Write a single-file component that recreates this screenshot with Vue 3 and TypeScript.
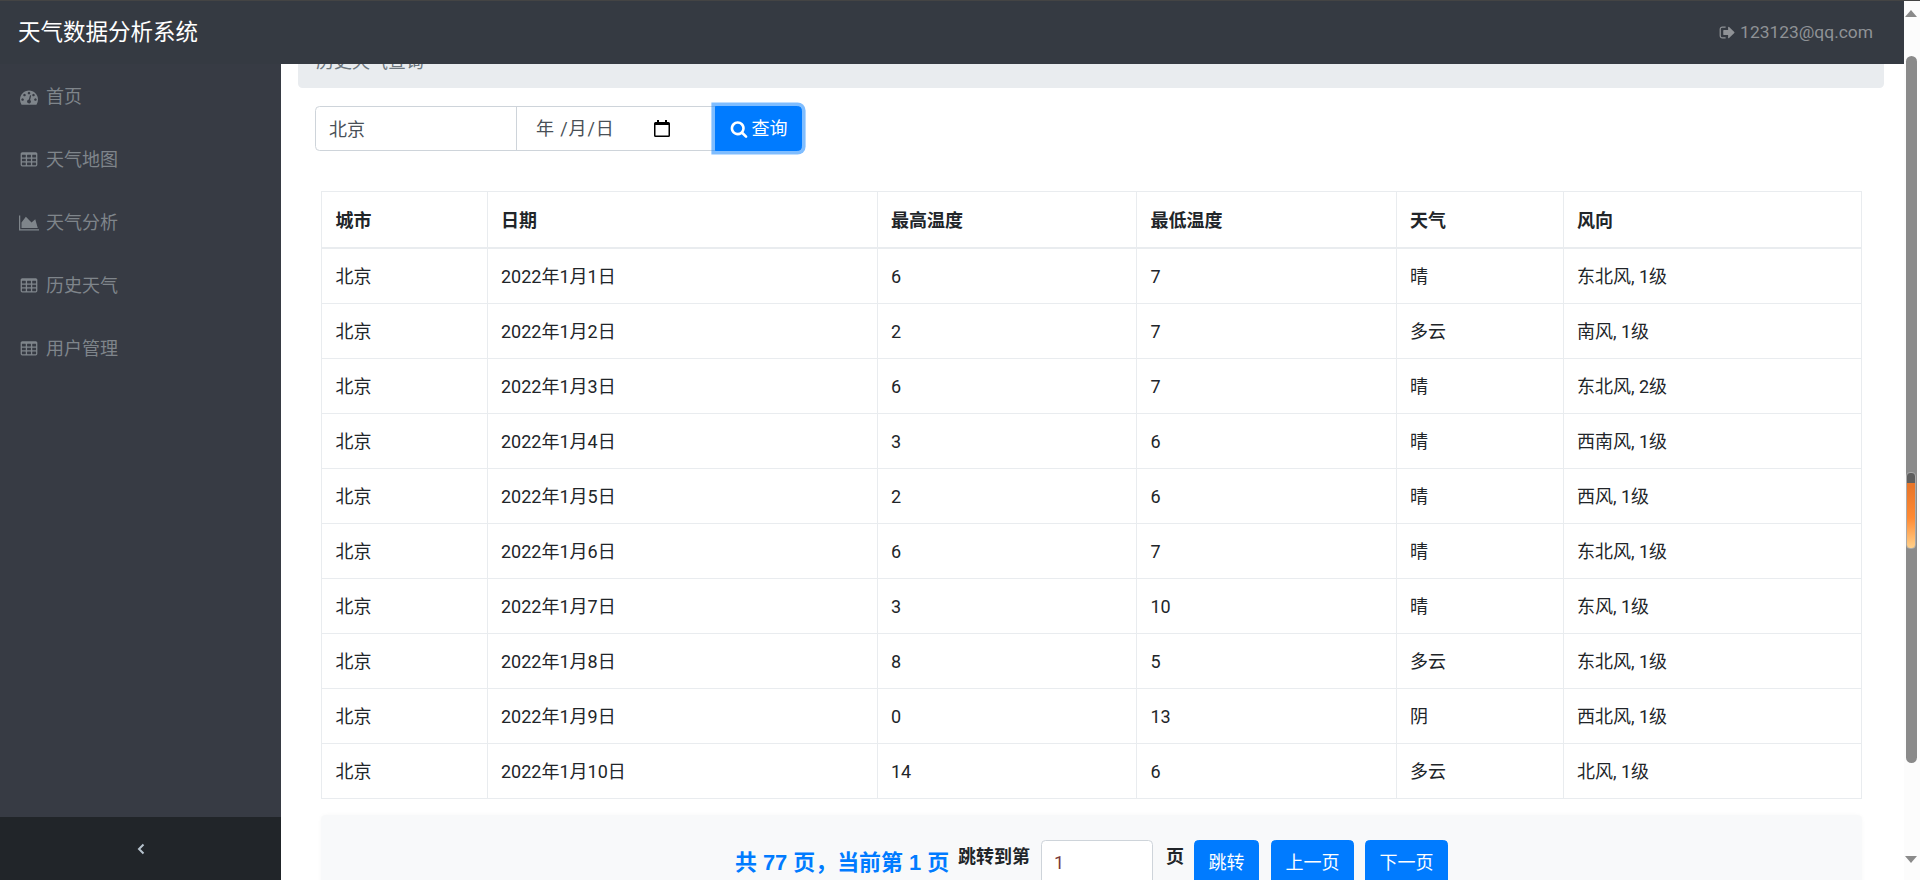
<script setup lang="ts">
interface WeatherRow {
  date: string;
  high: number;
  low: number;
  weather: string;
  wind: string;
}

const navItems = [
  { label: "首页", icon: "gauge" },
  { label: "天气地图", icon: "table" },
  { label: "天气分析", icon: "area" },
  { label: "历史天气", icon: "table" },
  { label: "用户管理", icon: "table" },
];

const columns = ["城市", "日期", "最高温度", "最低温度", "天气", "风向"];

const rows: WeatherRow[] = [
  { date: "2022年1月1日", high: 6, low: 7, weather: "晴", wind: "东北风, 1级" },
  { date: "2022年1月2日", high: 2, low: 7, weather: "多云", wind: "南风, 1级" },
  { date: "2022年1月3日", high: 6, low: 7, weather: "晴", wind: "东北风, 2级" },
  { date: "2022年1月4日", high: 3, low: 6, weather: "晴", wind: "西南风, 1级" },
  { date: "2022年1月5日", high: 2, low: 6, weather: "晴", wind: "西风, 1级" },
  { date: "2022年1月6日", high: 6, low: 7, weather: "晴", wind: "东北风, 1级" },
  { date: "2022年1月7日", high: 3, low: 10, weather: "晴", wind: "东风, 1级" },
  { date: "2022年1月8日", high: 8, low: 5, weather: "多云", wind: "东北风, 1级" },
  { date: "2022年1月9日", high: 0, low: 13, weather: "阴", wind: "西北风, 1级" },
  { date: "2022年1月10日", high: 14, low: 6, weather: "多云", wind: "北风, 1级" },
];

const tablePath =
  "M576 1376v-192q0-14-9-23t-23-9h-320q-14 0-23 9t-9 23v192q0 14 9 23t23 9h320q14 0 23-9t9-23zm0-384v-192q0-14-9-23t-23-9h-320q-14 0-23 9t-9 23v192q0 14 9 23t23 9h320q14 0 23-9t9-23zm512 384v-192q0-14-9-23t-23-9h-320q-14 0-23 9t-9 23v192q0 14 9 23t23 9h320q14 0 23-9t9-23zm-512-768v-192q0-14-9-23t-23-9h-320q-14 0-23 9t-9 23v192q0 14 9 23t23 9h320q14 0 23-9t9-23zm512 384v-192q0-14-9-23t-23-9h-320q-14 0-23 9t-9 23v192q0 14 9 23t23 9h320q14 0 23-9t9-23zm512 384v-192q0-14-9-23t-23-9h-320q-14 0-23 9t-9 23v192q0 14 9 23t23 9h320q14 0 23-9t9-23zm-512-768v-192q0-14-9-23t-23-9h-320q-14 0-23 9t-9 23v192q0 14 9 23t23 9h320q14 0 23-9t9-23zm512 384v-192q0-14-9-23t-23-9h-320q-14 0-23 9t-9 23v192q0 14 9 23t23 9h320q14 0 23-9t9-23zm0-384v-192q0-14-9-23t-23-9h-320q-14 0-23 9t-9 23v192q0 14 9 23t23 9h320q14 0 23-9t9-23zm128-320v1088q0 66-47 113t-113 47h-1344q-66 0-113-47t-47-113v-1088q0-66 47-113t113-47h1344q66 0 113 47t47 113z";
const gaugePath =
  "M384 1152q0-53-37.500-90.500t-90.500-37.500-90.500 37.500-37.500 90.500 37.500 90.500 90.500 37.500 90.500-37.500 37.500-90.500zm192-448q0-53-37.500-90.500t-90.500-37.500-90.500 37.500-37.500 90.500 37.500 90.500 90.500 37.500 90.500-37.500 37.500-90.500zm428 481l101-382q6-26-7.500-48.500t-38.500-29.500-48 7-30 39l-101 382q-60 5-107 43.500t-63 98.500q-20 77 20 146t117 89 146-20 89-117q16-60-6-117t-72-91zm660-33q0-53-37.500-90.500t-90.500-37.500-90.500 37.500-37.500 90.500 37.500 90.500 90.500 37.500 90.500-37.500 37.500-90.500zm-640-640q0-53-37.500-90.500t-90.500-37.500-90.500 37.500-37.500 90.500 37.500 90.500 90.500 37.500 90.500-37.500 37.500-90.500zm448 192q0-53-37.500-90.500t-90.500-37.500-90.500 37.500-37.500 90.500 37.500 90.500 90.500 37.500 90.500-37.500 37.500-90.500zm320 448q0 261-141 483-19 29-54 29h-1402q-35 0-54-29-141-221-141-483 0-182 71-348t191-286 286-191 348-71 348 71 286 191 191 286 71 348z";
const areaPath = "M2048 1536v128h-2048v-1536h128v1408h1920zm-384-1024l256 896h-1664v-576l448-576 576 576z";
const signOutPath =
  "M704 1440q0 4 1 20t.5 26.500-3 23.500-10 19.500-20.500 6.500h-320q-119 0-203.500-84.500t-84.500-203.500v-704q0-119 84.500-203.500t203.500-84.500h320q13 0 22.500 9.500t9.500 22.500q0 4 1 20t.5 26.500-3 23.500-10 19.500-20.500 6.500h-320q-66 0-113 47t-47 113v704q0 66 47 113t113 47h312l11.500 1 11.500 3 8 5.500 7 9 2 13.500zm928-544q0 26-19 45l-544 544q-19 19-45 19t-45-19-19-45v-288h-448q-26 0-45-19t-19-45v-384q0-26 19-45t45-19h448v-288q0-26 19-45t45-19 45 19l544 544q19 19 19 45z";
const searchPath =
  "M1216 832q0-185-131.500-316.500t-316.500-131.500-316.500 131.500-131.500 316.500 131.500 316.500 316.500 131.500 316.500-131.500 131.500-316.500zm512 832q0 52-38 90t-90 38q-54 0-90-38l-343-342q-179 124-399 124-143 0-273.500-55.500t-225-150-150-225-55.500-273.500 55.500-273.500 150-225 225-150 273.500-55.500 273.500 55.500 225 150 150 225 55.500 273.500q0 220-124 399l343 343q37 37 37 90z";
</script>

<template>
  <div class="shell">
    <div class="app">
      <header class="topbar">
        <span class="brand">天气数据分析系统</span>
        <a class="user">
          <svg class="user-icon" viewBox="0 0 1792 1792"><path :d="signOutPath" /></svg>
          123123@qq.com
        </a>
      </header>
      <div class="body">
        <aside class="sidebar">
          <nav class="nav">
            <a v-for="item in navItems" :key="item.label" class="nav-link">
              <svg v-if="item.icon === 'area'" class="nav-icon area" viewBox="0 0 2048 1792"><path :d="areaPath" /></svg>
              <svg v-else class="nav-icon" viewBox="0 0 1792 1792"><path :d="item.icon === 'gauge' ? gaugePath : tablePath" /></svg>
              <span>{{ item.label }}</span>
            </a>
          </nav>
          <div class="toggler">
            <svg width="10" height="12" viewBox="0 0 10 12"><path d="M7.5 1.500 3 6l4.500 4.500" /></svg>
          </div>
        </aside>
        <main class="main">
          <div class="breadcrumb">历史天气查询</div>
          <form class="search" @submit.prevent>
            <input class="control city" type="text" value="北京" />
            <div class="control date">
              <span>年 /月/日</span>
              <svg width="16" height="17" viewBox="0 0 16 17">
                <path d="M3 0h2v2h6V0h2v2h1.500A1.500 1.500 0 0 1 16 3.500v12a1.500 1.500 0 0 1-1.500 1.500h-13A1.500 1.500 0 0 1 0 15.500v-12A1.500 1.500 0 0 1 1.500 2H3zM1.500 5v10.500h13V5z" />
              </svg>
            </div>
            <button class="btn query" type="submit">
              <svg class="search-icon" viewBox="0 0 1792 1792"><path :d="searchPath" /></svg>
              查询
            </button>
          </form>
          <table class="table">
            <colgroup>
              <col class="col-city" />
              <col class="col-date" />
              <col class="col-temp" />
              <col class="col-temp" />
              <col class="col-weather" />
              <col />
            </colgroup>
            <thead>
              <tr>
                <th v-for="col in columns" :key="col">{{ col }}</th>
              </tr>
            </thead>
            <tbody>
              <tr v-for="row in rows" :key="row.date">
                <td>北京</td>
                <td>{{ row.date }}</td>
                <td>{{ row.high }}</td>
                <td>{{ row.low }}</td>
                <td>{{ row.weather }}</td>
                <td>{{ row.wind }}</td>
              </tr>
            </tbody>
          </table>
          <div class="pager">
            <span class="pager-info">共 77 页，当前第 1 页</span>
            <label class="pager-label">跳转到第</label>
            <input class="control pager-input" type="text" value="1" />
            <label class="pager-label pager-unit">页</label>
            <button class="btn jump">跳转</button>
            <button class="btn prev">上一页</button>
            <button class="btn next">下一页</button>
          </div>
        </main>
      </div>
    </div>
    <div class="scrollbar">
      <span class="arrow up"></span>
      <div class="thumb"></div>
      <span class="arrow down"></span>
      <div class="indicator"></div>
    </div>
  </div>
</template>

<style>
html,
body {
  margin: 0;
  overflow: hidden;
}
</style>

<style scoped>
.shell {
  position: relative;
  display: flex;
  height: 880px;
  width: 1920px;
  overflow: hidden;
  font-family: Roboto, "Noto Sans CJK SC", sans-serif;
  font-size: 18px;
  line-height: 27px;
  color: #212529;
  background: #fff;
  border-top: 1px solid #444;
  box-sizing: border-box;
}
.app {
  flex: 1;
  min-width: 0;
  display: flex;
  flex-direction: column;
}
.topbar {
  height: 63px;
  flex: none;
  display: flex;
  align-items: center;
  justify-content: space-between;
  background: #353a42;
  padding: 0 31px 0 18px;
  position: relative;
  z-index: 2;
}
.brand {
  font-size: 22.500px;
  color: #fff;
}
.user {
  color: #8f9296;
  display: flex;
  align-items: center;
  gap: 4px;
  font-size: 17.400px;
}
.user-icon {
  width: 17px;
  height: 17px;
  fill: #8f9296;
}
.body {
  flex: 1;
  min-height: 0;
  display: flex;
}
.sidebar {
  width: 281px;
  flex: none;
  display: flex;
  flex-direction: column;
  justify-content: space-between;
  background: #373b44;
}
.nav {
  display: flex;
  flex-direction: column;
  padding-top: 1px;
}
.nav-link {
  height: 63px;
  display: flex;
  align-items: center;
  gap: 8px;
  padding-left: 20px;
  color: #7f858b;
}
.nav-icon {
  width: 18px;
  height: 18px;
  fill: #7f858b;
  flex: none;
}
.nav-icon.area {
  width: 20px;
  margin-left: -1px;
  margin-right: -1px;
}
.toggler {
  height: 63px;
  display: flex;
  align-items: center;
  justify-content: center;
  background: #212529;
}
.toggler svg {
  fill: none;
  stroke: #b6c2cc;
  stroke-width: 2;
}
.main {
  flex: 1;
  min-width: 0;
  overflow: hidden;
  padding: 0 20px 0 17px;
}
.breadcrumb {
  margin-top: -30px;
  height: 54px;
  box-sizing: border-box;
  padding: 13.500px 18px;
  background: #e9ecef;
  border-radius: 4.500px;
  color: #6c757d;
}
.search {
  margin: 18px 0 0 17px;
  display: flex;
  align-items: stretch;
  height: 45px;
}
.control {
  box-sizing: border-box;
  height: 45px;
  border: 1.500px solid #ced4da;
  background: #fff;
  color: #495057;
  font: inherit;
  padding: 0 13px;
  outline: none;
}
.city {
  width: 202px;
  padding-bottom: 2px;
  border-radius: 4.500px 0 0 4.500px;
}
.date {
  width: 200px;
  margin-left: -1px;
  padding: 0 0 0 19px;
  display: flex;
  align-items: center;
  gap: 39px;
}
.date span {
  letter-spacing: 0.900px;
}
.date svg {
  fill: #000;
  flex: none;
}
.btn {
  box-sizing: border-box;
  height: 45px;
  border: 1px solid #007bff;
  background: #007bff;
  color: #fff;
  font: inherit;
  padding: 0 13.500px;
  border-radius: 4.500px;
  white-space: nowrap;
}
.query {
  width: 87px;
  margin-left: -1px;
  padding: 0;
  border-radius: 0 4.500px 4.500px 0;
  box-shadow: 0 0 0 3.600px rgba(0, 123, 255, 0.5);
  display: flex;
  align-items: center;
  justify-content: center;
  gap: 4px;
}
.search-icon {
  width: 18px;
  height: 18px;
  fill: #fff;
}
.table {
  margin: 40px 0 0 23px;
  width: 1541px;
  table-layout: fixed;
  border-collapse: collapse;
}
.col-city {
  width: 165.500px;
}
.col-date {
  width: 390px;
}
.col-temp {
  width: 259.500px;
}
.col-weather {
  width: 167px;
}
.table th,
.table td {
  height: 54px;
  box-sizing: border-box;
  padding: 13.500px;
  border: 1px solid #e9ecef;
  text-align: left;
  vertical-align: top;
}
.table th {
  height: 55px;
  padding-top: 14.500px;
  font-weight: 700;
  border-bottom: 2px solid #e9ecef;
}
.pager {
  margin: 16px 0 0 23px;
  width: 1541px;
  height: 100px;
  box-sizing: border-box;
  background: #f8f9fa;
  border-radius: 4.500px;
  box-shadow: 0 0 4px rgba(0, 0, 0, 0.03);
  padding-top: 25px;
  display: flex;
  justify-content: center;
  align-items: flex-start;
}
.pager-info {
  margin-top: 8px;
  font-size: 21.900px;
  line-height: 30px;
  font-weight: 700;
  color: #007bff;
  font-family: "Liberation Sans", "Noto Sans CJK SC", sans-serif;
}
.pager-label {
  margin: 3px 0 0 9px;
  font-weight: 700;
}
.pager-input {
  width: 112px;
  margin-left: 11px;
  border-radius: 4.500px;
  color: #7a3b3b;
  padding: 0 12px;
}
.pager-unit {
  margin-left: 13px;
}
.jump {
  margin-left: 10px;
}
.prev {
  margin-left: 12px;
}
.next {
  margin-left: 11px;
}
.scrollbar {
  width: 16px;
  flex: none;
  display: flex;
  flex-direction: column;
  align-items: center;
  background: #fcfcfc;
}
.thumb {
  width: 11px;
  height: 707px;
  margin: 39px 0 0 -2px;
  border-radius: 6px;
  background: #8a8a8a;
}
.arrow {
  width: 0;
  height: 0;
  margin-left: -2px;
  border-left: 6.500px solid transparent;
  border-right: 6.500px solid transparent;
}
.up {
  margin-top: 9px;
  border-bottom: 7px solid #8a8a8a;
}
.down {
  margin-top: 93px;
  border-top: 7px solid #8a8a8a;
}
.indicator {
  position: absolute;
  right: 4px;
  top: 471px;
  width: 8px;
  height: 75px;
  border-radius: 4px;
  border: 1px solid #a9a9a9;
  background: linear-gradient(#5e5e5e 0 10px, #e8762a 10px 14px, #ff8a33 60%, #ffd08a 100%);
}
</style>
